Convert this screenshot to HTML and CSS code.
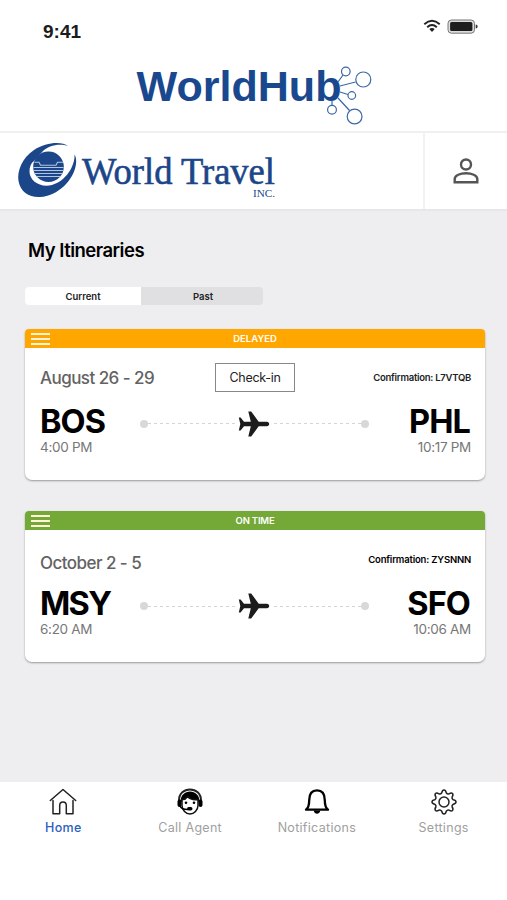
FILE: index.html
```html
<!DOCTYPE html>
<html lang="en">
<head>
<meta charset="utf-8">
<title>WorldHub</title>
<link rel="stylesheet" href="styles.css">
</head>
<body>
<svg class="defs" width="0" height="0" aria-hidden="true">
  <symbol id="plane" viewBox="0 0 32 26">
    <path d="M.8 6.500h1.800L6 10.800h6.800L10.300.5h2.900l7.500 10.300h8.100c3.200 0 3.200 4.400 0 4.400h-8.100l-7.500 10.300h-2.900l2.500-10.300H6l-3.400 4.300H.8L2.300 13z"/>
  </symbol>
</svg>
<div class="app">
  <header class="top">
    <div class="status">
      <span class="time">9:41</span>
      <svg class="status-icons" width="56" height="18" viewBox="0 0 56 18">
        <g fill="none" stroke="#222" stroke-width="1.9">
          <path d="M1.300 7.300Q9 .4 16.700 7.300M4.200 10.200Q9 5.800 13.800 10.200"/>
        </g>
        <path d="M6.300 12.100Q9 10 11.700 12.100L9 15z" fill="#222"/>
        <rect x="25" y="3" width="26.500" height="13.200" rx="3.400" fill="#ddd" stroke="#777" stroke-width="1"/>
        <rect x="27.100" y="5.100" width="22.300" height="9" rx="1.500" fill="#1d1d1d"/>
        <path d="M52.700 7.600c2.600.5 2.600 3.500 0 4z" fill="#333"/>
      </svg>
    </div>
    <svg class="hub" width="240" height="64" viewBox="134 64 240 64">
      <text x="136.500" y="101" textLength="205" lengthAdjust="spacingAndGlyphs">WorldHub</text>
      <g fill="none" stroke="#3d67a6" stroke-width="1.2">
        <path d="M338 82l5-7M340 86l15.500-4M340 92l8 2.500M338 98l11.500 12.500M332 100v5"/>
        <circle cx="345.800" cy="71.500" r="4.300"/>
        <circle cx="363.300" cy="79.500" r="7.500"/>
        <circle cx="351.800" cy="95.500" r="3.800"/>
        <circle cx="332" cy="109.700" r="4.400"/>
        <circle cx="354.600" cy="116.500" r="7.400"/>
      </g>
    </svg>
  </header>
  <div class="brand">
    <svg class="travel" width="262" height="62" viewBox="16 139 262 62">
      <g fill="#1b4689">
        <path d="M68 146.200C62 141 46 142 34 150C22 158 17 171 18.500 181C20.500 192 29 197.500 40 197C58 196 74 180 76 164C76.500 160 76 157 74.600 154.500C75 166 66 181 52 185C40 188 30 181 29.500 172C29.300 167 31 163 34 161L42.500 151.500C48 145.500 60 143 68 146.200Z"/>
        <circle cx="48.500" cy="166.800" r="15.300"/>
      </g>
      <g stroke="#b4c6df" stroke-width="1.100" fill="none"><path d="M34.500 162.200h4.500l1.500 3h15.500l1.500-3h5.500"/><path d="M33.500 167.500h30M33.500 170.500h30M34.500 173.500h28M36.500 176.500h24"/></g>
      <text class="travel-name" x="82" y="184" textLength="193" lengthAdjust="spacingAndGlyphs">World Travel</text>
      <text class="travel-inc" x="253" y="196.500" textLength="22" lengthAdjust="spacingAndGlyphs">INC.</text>
    </svg>
    <button class="profile" aria-label="Profile">
      <svg width="26" height="26" viewBox="0 0 26 26" fill="none" stroke="#555" stroke-width="2.400"><circle cx="13" cy="6.500" r="5"/><path d="M1.700 24.300V21c0-7.600 22.600-7.600 22.600 0v3.300z"/></svg>
    </button>
  </div>
  <main>
    <h1>My Itineraries</h1>
    <div class="tabs"><span class="tab on">Current</span><span class="tab past">Past</span></div>

    <section class="card">
      <div class="bar delayed"><i class="menu"></i><span>DELAYED</span></div>
      <div class="body">
        <div class="info"><span class="date">August 26 - 29</span><button class="check">Check-in</button><span class="conf">Confirmation: L7VTQB</span></div>
        <div class="route">
          <div class="stop"><b>BOS</b><span>4:00 PM</span></div>
          <div class="line"><i class="dot"></i><i class="dash"></i><svg width="32" height="26"><use href="#plane"/></svg><i class="dash"></i><i class="dot"></i></div>
          <div class="stop end"><b>PHL</b><span>10:17 PM</span></div>
        </div>
      </div>
    </section>

    <section class="card second">
      <div class="bar ontime"><i class="menu"></i><span>ON TIME</span></div>
      <div class="body">
        <div class="info"><span class="date">October 2 - 5</span><span class="conf black">Confirmation: ZYSNNN</span></div>
        <div class="route">
          <div class="stop msy"><b>MSY</b><span>6:20 AM</span></div>
          <div class="line"><i class="dot"></i><i class="dash"></i><svg width="32" height="26"><use href="#plane"/></svg><i class="dash"></i><i class="dot"></i></div>
          <div class="stop end"><b>SFO</b><span>10:06 AM</span></div>
        </div>
      </div>
    </section>
  </main>
  <nav>
    <a class="active">
      <svg width="28" height="28" viewBox="0 0 28 28" fill="none" stroke="#222" stroke-width="1.500" stroke-linejoin="round" stroke-linecap="round"><path d="M1.300 12.500L14 1.500l12.700 11M4 12.500v13.200h6.700v-8c0-4.800 6.600-4.800 6.600 0v8H24V12.500"/></svg>
      <span>Home</span>
    </a>
    <a>
      <svg width="28" height="28" viewBox="0 0 28 28"><path d="M3 13C2.500-2.500 25.500-2.500 25 13" fill="none" stroke="#222" stroke-width="2"/><path d="M4.500 14C4 0 24 0 23.500 14z" fill="#000"/><rect x="1.500" y="11.500" width="4" height="7.500" rx="2"/><rect x="22.500" y="11.500" width="4" height="7.500" rx="2"/><path d="M6 11.500c3.500.5 5-2.300 5.500-3 2 2.500 6 3.500 10.500 3v6c0 4.500-4 8.500-8 8.500s-8-4-8-8.500z" fill="#fff" stroke="#111" stroke-width="1.500"/><path d="M4 18c1 3 4 3.500 8 3.500" fill="none" stroke="#000" stroke-width="1.300"/><circle cx="10" cy="14.800" r="1.300"/><circle cx="18" cy="14.800" r="1.300"/><rect x="11" y="19" width="5.500" height="3.500" rx="1.700"/></svg>
      <span>Call Agent</span>
    </a>
    <a>
      <svg width="28" height="28" viewBox="0 0 28 28"><path d="M3 21.700c2.500-2 3.200-5 3.200-9.500C6.200 6 9 2.400 14 2.400S21.800 6 21.800 12.200c0 4.500.7 7.500 3.200 9.500z" fill="none" stroke="#000" stroke-width="2.300" stroke-linejoin="round"/><path d="M10.800 22.500h6.400c0 4.200-6.400 4.200-6.400 0z"/></svg>
      <span>Notifications</span>
    </a>
    <a>
      <svg width="28" height="28" viewBox="-14 -14 28 28" fill="none" stroke="#222" stroke-width="1.500" stroke-linejoin="round"><path d="M-2.200-9.300Q-1.600-12 0-12T2.200-9.300Q3.500-7.500 5.020-8.130Q7.350-9.620 8.480-8.480T8.130-5.020Q7.500-3.500 9.300-2.200Q12-1.600 12 0T9.300 2.200Q7.500 3.500 8.130 5.020Q9.620 7.350 8.480 8.480T5.020 8.130Q3.500 7.500 2.200 9.300Q1.600 12 0 12T-2.200 9.300Q-3.500 7.500-5.020 8.130Q-7.350 9.620-8.480 8.480T-8.130 5.020Q-7.500 3.500-9.300 2.200Q-12 1.600-12 0T-9.300-2.200Q-7.500-3.500-8.130-5.020Q-9.620-7.350-8.480-8.480T-5.020-8.130Q-3.500-7.500-2.200-9.300Z"/><circle r="5"/></svg>
      <span>Settings</span>
    </a>
  </nav>
</div>
</body>
</html>
```
FILE: styles.css
```css
* { box-sizing: border-box; }
body { margin: 0; background: #fff; font-family: Inter, "Liberation Sans", sans-serif; color: #000; }
button { font: inherit; background: #fff; padding: 0; }
.defs { display: block; height: 0; }
.app { width: 507px; height: 900px; display: flex; flex-direction: column; overflow: hidden; }

.top { height: 131px; display: flex; flex-direction: column; flex: none; }
.status { height: 64px; display: flex; justify-content: space-between; align-items: flex-start; padding: 17px 28px 0 43px; }
.time { font: bold 19px/30px "Liberation Sans", sans-serif; color: #1c1c1c; }
.hub { margin-left: 134px; display: block; }
.hub text { font: bold 42px "Liberation Sans", sans-serif; fill: #19488f; }

.brand { height: 78px; flex: none; display: flex; justify-content: space-between; border-top: 2px solid #f0f0f1; }
.travel { margin: 6px 0 0 16px; }
.travel-name { font: 37px "Liberation Serif", serif; fill: #1b4689; stroke: #1b4689; stroke-width: .6px; }
.travel-inc { font: 11px "Liberation Serif", serif; fill: #1b4689; }
.profile { width: 84px; border: 0; border-left: 2px solid #f2f2f3; display: flex; justify-content: center; align-items: center; }

main { height: 573px; flex: none; background: linear-gradient(#e3e3e5, #eeeef0 3px); padding: 0 22px 0 25px; }
h1 { margin: 0; padding: 28px 0 0 3px; font-size: 18.500px; line-height: 26px; font-weight: 600; letter-spacing: -.5px; }
.tabs { width: 238px; height: 18px; margin-top: 24px; display: flex; background: #e0e0e2; border-radius: 4px; }
.tab { width: 118px; font-size: 9.500px; line-height: 19px; font-weight: 600; text-align: center; color: #222; }
.tab.on { width: 116px; background: #fff; border-radius: 4px 0 0 4px; }
.tab.past { margin-left: 3px; }

.card { width: 460px; height: 151px; margin-top: 24px; background: #fff; border-radius: 4px 4px 7px 7px; overflow: hidden; box-shadow: 0 1px 2px #999; }
.card.second { margin-top: 31.400px; }
.bar { height: 19px; display: grid; grid-template-columns: 30px 1fr 30px; align-items: center; color: #fff; text-align: center; font-size: 9.500px; line-height: 19px; font-weight: 600; }
.delayed { background: #ffa700; }
.ontime { background: #74a837; letter-spacing: -.2px; }
.menu { width: 19px; height: 12px; margin-left: 6px; border-top: 2px solid #fff3d8; border-bottom: 2px solid #fff3d8; background: linear-gradient(#fff3d8, #fff3d8) 0 3px / 19px 2px no-repeat; }
.body { padding: 14px 14px 0 15px; }
.info { height: 30px; display: grid; grid-template-columns: 175px 80px 1fr; align-items: center; }
.date { font-size: 17px; line-height: 24px; font-weight: 500; color: #636363; white-space: nowrap; letter-spacing: -.55px; padding-top: 1px; }
.check { height: 29px; border: 1px solid #888; font-size: 12.500px; color: #222; letter-spacing: -.3px; }
.conf { grid-column: 3; text-align: right; font-size: 9.500px; font-weight: 600; color: #222; letter-spacing: -.26px; }
.conf.black { color: #000; letter-spacing: -.18px; padding-bottom: 5px; }
.second .info { height: 36px; }
.second .route { margin-top: 4px; }
.second .line { height: 44px; }
.route { display: flex; height: 52px; margin-top: 10px; justify-content: space-between; }
.stop { display: flex; flex-direction: column; width: 90px; }
.stop b { font-size: 32.500px; line-height: 36px; font-weight: 700; letter-spacing: -.9px; padding-top: 2px; height: 38px; }
.stop.msy b { letter-spacing: -1.700px; }
.stop.end b { margin-right: 1px; }
.stop span { font-size: 13.500px; line-height: 14px; color: #777; letter-spacing: -.3px; white-space: nowrap; }
.stop.end { align-items: flex-end; }
.line { width: 229px; height: 43px; display: flex; align-items: center; margin-right: 2px; }
.line svg { margin: 0 4px 0 2px; fill: #1c1c1c; flex: none; }
.dot { width: 8px; height: 8px; border-radius: 50%; background: #d8d8d8; flex: none; }
.dash { flex: 1; height: 1px; background: repeating-linear-gradient(90deg, #d5d5d5 0 3px, transparent 3px 6px); }

nav { flex: 1; display: flex; background: #fff; padding-top: 6px; }
nav a { width: 126.750px; display: flex; flex-direction: column; align-items: center; color: #a0a0a0; }
nav span { font-size: 12.500px; line-height: 17px; margin-top: 3px; letter-spacing: .3px; }
nav .active { color: #2b5fc0; }
nav .active span { font-weight: 500; }
```
